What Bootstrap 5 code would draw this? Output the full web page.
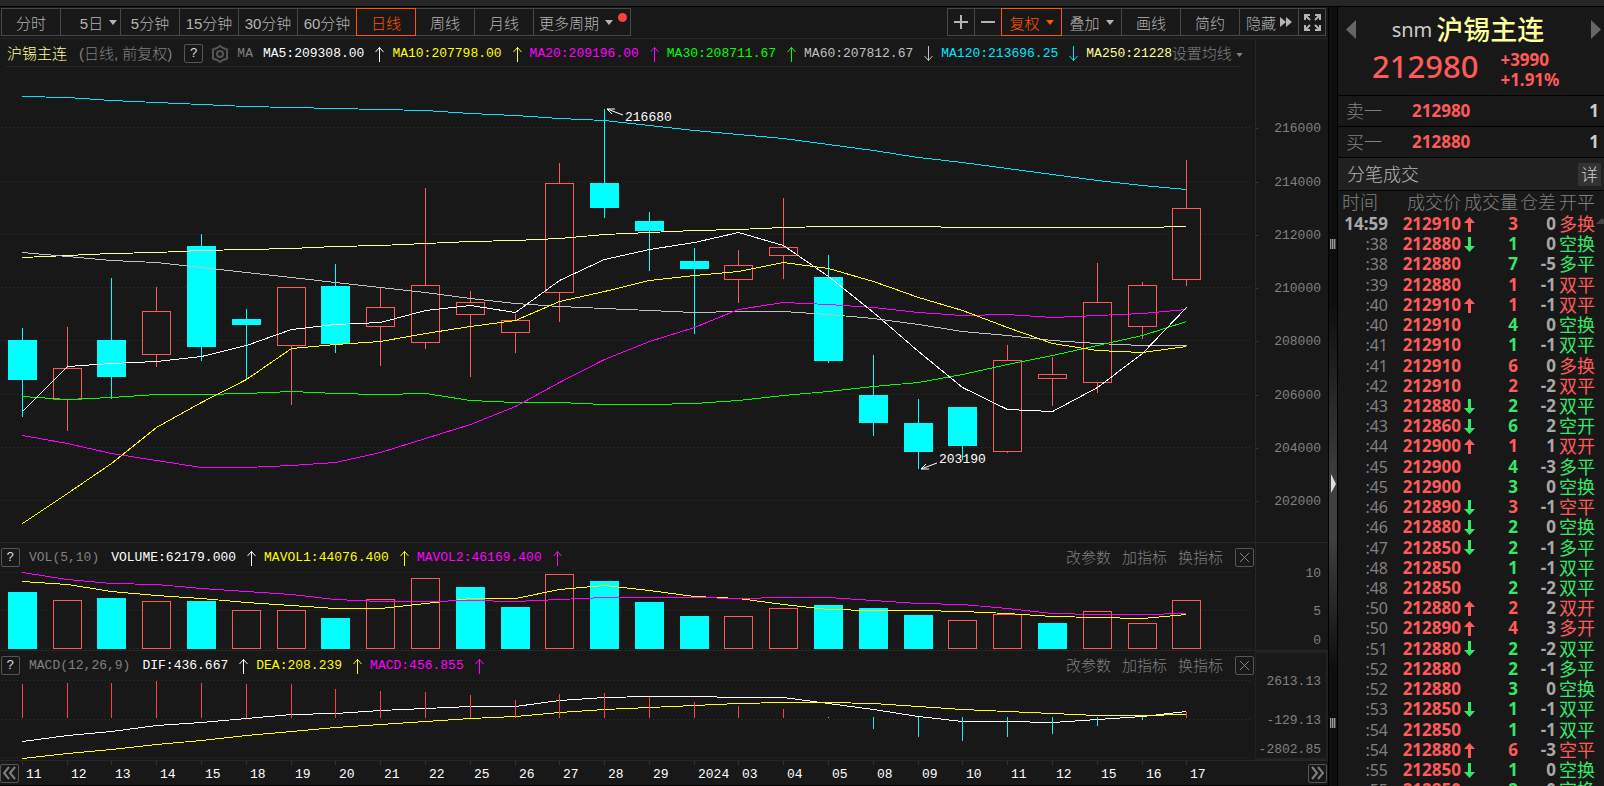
<!DOCTYPE html>
<html lang="zh-CN">
<head>
<meta charset="utf-8">
<meta name="viewport" content="width=device-width, initial-scale=1">
<title>沪锡主连 日线</title>
<link href="https://cdn.jsdelivr.net/npm/bootstrap@5.3.0/dist/css/bootstrap.min.css" rel="stylesheet">
<style>
:root { --bg:#181818; --edge:#474747; --rule:#262626; --dim:#808080; --txt:#a8a8a8; --red:#ff5a5a; --green:#36e668; --gold:#ffff9b; --hot:#ff5500; }
body { background:var(--bg); color:var(--txt); font-family:"Liberation Mono","Noto Sans CJK SC",monospace; font-size:13px; line-height:20px; }
button { background:none; border:0; padding:0; color:inherit; font:inherit; }
.fit-y { min-height:0; }
.fit-x { min-width:0; }
.strip { height:7px; background:#262626; border-bottom:1px solid #000; }
.tools { padding:1px 2px 2px 1px; height:31px; }
.tool { height:28px; min-width:60px; margin-right:-1px; border:1px solid var(--edge); font:300 15px "Liberation Sans","Noto Sans CJK SC",sans-serif; color:#b4b4b4; display:flex; align-items:center; justify-content:center; gap:6px; position:relative; white-space:nowrap; }
.tool.hot { border-color:var(--hot); color:var(--hot); z-index:1; }
.tool.square { min-width:28px; }
.tool.wide { min-width:61px; }
.tool.more { min-width:98px; padding-right:12px; }
.dot { position:absolute; right:3px; top:4px; width:9px; height:9px; border-radius:50%; background:#ff4040; }
.info { height:28px; white-space:nowrap; }
.pane { border-top:1px solid var(--rule); }
.pane .info { margin-top:-1px; padding-top:3px; }
.vol-pane { height:108px; }
.macd-pane { height:110px; }
.plot { min-width:0; flex:1 1 0; }
.plot > svg, .scale > svg { display:block; width:100%; flex:1 1 0; min-height:0; overflow:visible; }
.scale { width:73px; flex:none; border-left:1px solid var(--rule); padding-top:28px; }
.framed { border:1px solid #222; border-width:2px 2px 2px 1px; padding-top:26px; }
.cjk { font:300 15px/20px "Liberation Sans","Noto Sans CJK SC",sans-serif; }
.square-btn { width:19px; height:19px; margin:0 1px; border:1px solid #555; border-radius:2px; color:#ddd; font-size:13px; line-height:18px; text-align:center; flex:none; display:flex; align-items:center; justify-content:center; }
.title-row { padding-left:7px; }
.title-row .square-btn { margin:0 0 0 12px; }
.actions { gap:11px; padding-right:11px; }
.ma-list { padding-left:2px; }
.reading { display:flex; align-items:center; gap:10px; flex:none; margin-right:8px; }
.c-dim { color:var(--dim); } .c-white { color:#fff; } .c-yellow { color:#ff0; } .c-magenta { color:#f0f; } .c-lime { color:#0f0; } .c-silver { color:#c0c0c0; } .c-cyan { color:#00e5ff; } .c-gold { color:var(--gold); }
.c-red { color:var(--red); } .c-green { color:var(--green); }
.time-row { height:25px; border-top:1px solid var(--rule); }
.time-row .days { display:block; flex:1 1 0; min-width:0; height:24px; }
.base { height:1px; background:#000; }
.splitter { width:10px; border:1px solid #000; border-width:0 1px; background:linear-gradient(#0e0e0e 38%, #404040 62%, #404040 68%, #0e0e0e 85%); }
.splitter i { flex:31 1 0; }
.splitter i:first-child { flex-grow:32; }
.splitter i:last-child { flex-grow:8; }
.grip { width:6px; height:10px; background:repeating-linear-gradient(90deg,#999 0 1px,#444 1px 2px); }
.side { width:266px; font-family:"Noto Sans","Noto Sans CJK SC",sans-serif; font-size:17px; overflow:hidden; }
.quote { height:89px; padding:6px 3px 0 8px; border-bottom:1px solid #000; }
.quote .pair { padding-right:11px; }
.quote .name { font-size:27px; line-height:33px; font-weight:500; color:var(--gold); }
.quote .code { font-size:20px; color:#ccc; }
.quote .last { font-size:31px; line-height:40px; padding-left:26px; font-weight:500; color:var(--red); }
.quote .chg { font-weight:700; line-height:20px; padding:4px 0 0 22px; color:var(--red); }
.lvl { border-bottom:1px solid #000; height:31px; padding:0 5px 0 8px; }
.lvl .who { width:66px; font-weight:300; font-size:18px; color:var(--dim); }
.lvl b { color:var(--red); }
.lvl .qty { color:#ccc; }
.sect { height:33px; background:#202020; border-bottom:1px solid #000; padding:0 3px 0 9px; font-size:18px; font-weight:300; color:#b4b4b4; }
.sect button { width:23px; height:23px; background:#333; font-size:17px; line-height:23px; color:#ccc; }
.ticks { table-layout:fixed; width:266px; border-collapse:collapse; text-align:right; white-space:nowrap; }
.ticks th { font-size:18px; font-weight:300; color:var(--dim); height:23px; padding:0; line-height:23px; }
.ticks td { height:20px; line-height:20px; padding:0; font-weight:700; }
.ticks tr:nth-child(9n+4) td, .ticks tr:nth-child(9n+8) td { height:21px; }
.ticks .t { font-weight:400; font-size:16px; color:var(--dim); }
.ticks .full { font-weight:700; font-size:17px; color:var(--txt); }
.ticks .p { color:var(--red); padding-right:3px; }
.ticks .when { padding-right:10px; }
.ticks .cost { padding-right:3px; }
.ticks .d { color:var(--txt); }
.ticks .k { font-size:18px; text-align:left; padding-left:3px; }
.ticks td.k { font-weight:400; }
.ticks svg { display:block; }
.up-mark { position:absolute; right:0; top:27px; }
svg text { font-family:"Liberation Mono",monospace; font-size:13px; dominant-baseline:central; }
</style>
</head>
<body class="vh-100 overflow-hidden d-flex flex-column">
<svg width="0" height="0" class="position-absolute" aria-hidden="true">
  <symbol id="up" viewBox="0 0 10 16"><path d="M5.500 16V1M1.500 6L5.500 1.500L9.500 6" fill="none" stroke="currentColor"/></symbol>
  <symbol id="down" viewBox="0 0 10 16"><path d="M5.500 0V15M1.500 10L5.500 14.500L9.500 10" fill="none" stroke="currentColor"/></symbol>
  <symbol id="caret" viewBox="0 0 8 5"><path d="M0 0H8L4 5Z" fill="currentColor"/></symbol>
  <symbol id="tickup" viewBox="0 0 11 15"><path d="M5.500 0L11 6H7V15H4V6H0Z" fill="currentColor"/></symbol>
  <symbol id="tickdown" viewBox="0 0 11 15"><path d="M5.500 15L11 9H7V0H4V9H0Z" fill="currentColor"/></symbol>
  <symbol id="cross" viewBox="0 0 11 11"><path d="M1 1L10 10M10 1L1 10" stroke="currentColor" fill="none"/></symbol>
</svg>
<div class="strip flex-shrink-0"></div>
<div class="d-flex flex-grow-1 fit-y">
  <main class="d-flex flex-column flex-grow-1 fit-x">
    <nav class="tools d-flex justify-content-between" aria-label="周期">
      <div class="d-flex">
        <button class="tool">分时</button>
        <button class="tool wide ps-3">5日<svg width="8" height="5"><use href="#caret"/></svg></button>
        <button class="tool">5分钟</button>
        <button class="tool">15分钟</button>
        <button class="tool">30分钟</button>
        <button class="tool">60分钟</button>
        <button class="tool hot">日线</button>
        <button class="tool">周线</button>
        <button class="tool">月线</button>
        <button class="tool more">更多周期<svg width="8" height="5"><use href="#caret"/></svg><span class="dot"></span></button>
      </div>
      <div class="d-flex">
        <button class="tool square" aria-label="放大"><svg width="14" height="14"><path d="M7 0V14M0 7H14" stroke="currentColor" stroke-width="2"/></svg></button>
        <button class="tool square" aria-label="缩小"><svg width="14" height="14"><path d="M0 7H14" stroke="currentColor" stroke-width="2"/></svg></button>
        <button class="tool hot wide">复权<svg width="8" height="5"><use href="#caret"/></svg></button>
        <button class="tool wide">叠加<svg width="8" height="5"><use href="#caret"/></svg></button>
        <button class="tool">画线</button>
        <button class="tool">简约</button>
        <button class="tool gap-1">隐藏<svg width="12" height="10"><path d="M0 0L6 5L0 10ZM6 0L12 5L6 10Z" fill="currentColor"/></svg></button>
        <button class="tool square me-0" aria-label="全屏"><svg width="17" height="17" fill="none" stroke="currentColor" stroke-width="2"><path d="M1 6V1H6M1 1L6 6M11 1H16V6M16 1L11 6M1 11V16H6M1 16L6 11M16 11V16H11M16 16L11 11"/></svg></button>
      </div>
    </nav>

    <section class="pane d-flex flex-grow-1 fit-y">
      <div class="plot d-flex flex-column">
        <div class="info title-row d-flex align-items-center">
          <span class="cjk c-gold">沪锡主连</span>
          <span class="cjk c-dim ms-2 ps-1">(日线, 前复权)</span>
          <button class="square-btn">?</button>
          <svg width="18" height="18" class="ms-2 flex-shrink-0" fill="none" stroke="#555" stroke-width="2"><path d="M9 1L12 3L16 4.500V13.500L12 15L9 17L6 15L2 13.500V4.500L6 3Z"/><circle cx="9" cy="9" r="3"/></svg>
          <span class="c-dim ms-2">MA</span>
          <div class="ma-list d-flex flex-grow-1 overflow-hidden ms-2" id="ma"></div>
          <button class="cjk c-dim me-2 pe-1 flex-shrink-0">设置均线 <svg width="7" height="4" class="align-middle"><use href="#caret"/></svg></button>
        </div>
        <svg id="price"></svg>
      </div>
      <div class="scale d-flex flex-column"><svg id="priceScale"></svg></div>
    </section>

    <section class="pane vol-pane d-flex flex-shrink-0">
      <div class="plot d-flex flex-column">
        <div class="info d-flex align-items-center">
          <button class="square-btn">?</button>
          <span class="c-dim ms-2 me-2 pe-1">VOL(5,10)</span>
          <div class="d-flex flex-grow-1 overflow-hidden" id="vo"></div>
          <div class="actions d-flex cjk c-dim"><button>改参数</button><button>加指标</button><button>换指标</button></div>
          <button class="square-btn c-dim" aria-label="关闭"><svg width="11" height="11"><use href="#cross"/></svg></button>
        </div>
        <svg id="volume"></svg>
      </div>
      <div class="scale d-flex flex-column"><svg id="volumeScale"></svg></div>
    </section>

    <section class="pane macd-pane d-flex flex-shrink-0">
      <div class="plot d-flex flex-column">
        <div class="info d-flex align-items-center">
          <button class="square-btn">?</button>
          <span class="c-dim ms-2 me-2 pe-1">MACD(12,26,9)</span>
          <div class="d-flex flex-grow-1 overflow-hidden" id="mc"></div>
          <div class="actions d-flex cjk c-dim"><button>改参数</button><button>加指标</button><button>换指标</button></div>
          <button class="square-btn c-dim" aria-label="关闭"><svg width="11" height="11"><use href="#cross"/></svg></button>
        </div>
        <svg id="macd"></svg>
      </div>
      <div class="scale framed d-flex flex-column"><svg id="macdScale"></svg></div>
    </section>

    <div class="time-row d-flex align-items-center flex-shrink-0">
      <button class="square-btn c-dim ms-0" aria-label="向前"><svg width="13" height="14" fill="none" stroke="currentColor" stroke-width="2"><path d="M6 1L1 7L6 13M12 1L7 7L12 13"/></svg></button>
      <svg id="days" class="days"></svg>
      <button class="square-btn c-dim" aria-label="向后"><svg width="13" height="14" fill="none" stroke="currentColor" stroke-width="2"><path d="M1 1L6 7L1 13M7 1L12 7L7 13"/></svg></button>
    </div>
    <div class="base"></div>
  </main>

  <div class="splitter d-flex flex-column align-items-center flex-shrink-0">
    <i></i><span class="grip"></span><i></i>
    <svg width="5" height="19"><path d="M0 0L5 10L0 19Z" fill="#ddd"/></svg>
    <i></i><span class="grip"></span><i></i>
  </div>

  <aside class="side flex-shrink-0">
    <div class="quote">
      <div class="d-flex align-items-center justify-content-between">
        <button aria-label="上一个" class="d-flex"><svg width="10" height="19"><path d="M10 0V19L0 9.500Z" fill="#666"/></svg></button>
        <div class="pair d-flex align-items-center gap-1"><span class="code">snm</span><span class="name">沪锡主连</span></div>
        <button aria-label="下一个" class="d-flex"><svg width="10" height="19"><path d="M0 0V19L10 9.500Z" fill="#666"/></svg></button>
      </div>
      <div class="d-flex align-items-start"><span class="last">212980</span><div class="chg"><div>+3990</div><div>+1.91%</div></div></div>
    </div>
    <div class="lvl d-flex align-items-center"><span class="who">卖一</span><b>212980</b><b class="qty ms-auto">1</b></div>
    <div class="lvl d-flex align-items-center"><span class="who">买一</span><b>212880</b><b class="qty ms-auto">1</b></div>
    <div class="sect d-flex align-items-center justify-content-between"><span>分笔成交</span><button>详</button></div>
    <div class="position-relative">
      <table class="ticks">
        <colgroup><col style="width:50px"><col style="width:76px"><col style="width:12px"><col style="width:42px"><col style="width:38px"><col style="width:48px"></colgroup>
        <thead><tr><th class="when">时间</th><th class="cost">成交价</th><th colspan="2">成交量</th><th>仓差</th><th class="k">开平</th></tr></thead>
        <tbody id="deals"></tbody>
      </table>
      <svg width="8" height="7" class="up-mark"><path d="M0 6L6 0L8 2V6Z" fill="#444"/></svg>
    </div>
  </aside>
</div>

<script src="https://cdn.jsdelivr.net/npm/bootstrap@5.3.0/dist/js/bootstrap.bundle.min.js"></script>
<script>
const byId = id => document.getElementById(id);

// Indicator readings: colour, text, direction
const readings = {
  ma: [['white','MA5:209308.00','up'],['yellow','MA10:207798.00','up'],['magenta','MA20:209196.00','up'],['lime','MA30:208711.67','up'],['silver','MA60:207812.67','down'],['cyan','MA120:213696.25','down'],['gold','MA250:212284.40','up']],
  vo: [['white','VOLUME:62179.000','up'],['yellow','MAVOL1:44076.400','up'],['magenta','MAVOL2:46169.400','up']],
  mc: [['white','DIF:436.667','up'],['yellow','DEA:208.239','up'],['magenta','MACD:456.855','up']]
};
for (const [id, list] of Object.entries(readings))
  byId(id).innerHTML = list.map(([c, t, a]) => `<span class="reading c-${c}">${t}<svg width="10" height="16"><use href="#${a}"/></svg></span>`).join('');

// Deals: time, price, arrow, volume, colour, position change, kind
const deals = `14:59 212910 u 3 r 0 多换|:38 212880 d 1 g 0 空换|:38 212880 - 7 g -5 多平|:39 212880 - 1 r -1 双平|:40 212910 u 1 r -1 双平|:40 212910 - 4 g 0 空换|:41 212910 - 1 g -1 双平|:41 212910 - 6 r 0 多换|:42 212910 - 2 r -2 双平|:43 212880 d 2 g -2 双平|:43 212860 d 6 g 2 空开|:44 212900 u 1 r 1 双开|:45 212900 - 4 g -3 多平|:45 212900 - 3 g 0 空换|:46 212890 d 3 r -1 空平|:46 212880 d 2 g 0 空换|:47 212850 d 2 g -1 多平|:48 212850 - 1 g -1 双平|:48 212850 - 2 g -2 双平|:50 212880 u 2 r 2 双开|:50 212890 u 4 r 3 多开|:51 212880 d 2 g -2 双平|:52 212880 - 2 g -1 多平|:52 212880 - 3 g 0 空换|:53 212850 d 1 g -1 双平|:54 212850 - 1 g -1 双平|:54 212880 u 6 r -3 空平|:55 212850 d 1 g 0 空换|:55 212850 - 2 g 0 空换`;
byId('deals').innerHTML = deals.split('|').map((row, i) => {
  const [t, p, a, v, c, d, k] = row.split(' '), col = c === 'r' ? 'c-red' : 'c-green';
  const mark = a === '-' ? '' : `<svg width="11" height="15" class="${a === 'u' ? 'c-red' : 'c-green'}"><use href="#tick${a === 'u' ? 'up' : 'down'}"/></svg>`;
  return `<tr><td class="t ${i ? '' : 'full'}">${t}</td><td class="p">${p}</td><td>${mark}</td><td class="${col}">${v}</td><td class="d">${d}</td><td class="k ${col}">${k}</td></tr>`;
}).join('');

const xs = [22,67,111,156,201,246,291,335,380,425,470,515,559,604,649,694,738,783,828,873,918,962,1007,1052,1097,1142,1186];
const dates = '11 12 13 14 15 18 19 20 21 22 25 26 27 28 29 2024 03 04 05 08 09 10 11 12 15 16 17'.split(' ');
const rising = xs.map((x, i) => [1,3,6,8,9,10,11,12,16,17,22,23,24,25,26].includes(i));
const volRising = xs.map((x, i) => [1,3,5,6,8,9,12,16,17,21,22,24,25,26].includes(i));
// Candles: high, body top, body bottom, low
const candles = [[262,274,314,351],[261,302,334,365],[212,274,311,333],[221,245,289,301],[168,180,281,295],[243,253,259,314],[221,221,280,339],[198,220,278,287],[221,241,261,300],[122,219,277,283],[225,236,249,311],[248,254,267,287],[97,117,227,256],[43,117,142,152],[146,155,165,205],[182,195,203,268],[184,199,214,237],[132,181,190,213],[189,211,295,297],[289,329,357,370],[333,357,386,403],[341,341,380,394],[279,294,386,387],[291,308,313,340],[197,236,317,327],[216,219,261,273],[94,142,214,220]];
const averages = [
  ['#00e5ff',[30,31,34,36,38,40,41,42,43,44,47,49,52,54,59,64,68,72,78,84,91,96,102,108,114,119,123]],
  ['#ffff9b',[191,189,187,186,184,183,182,180,179,177,175,174,172,168,166,164,163,161,160,160,160,161,161,161,161,161,160]],
  ['#c0c0c0',[186,190,194,196,201,206,211,216,221,226,232,237,240,242,244,246,245,245,248,252,258,265,269,274,277,279,279]],
  ['#00ff00',[330,333,331,328,328,327,325,327,328,327,334,336,336,338,338,337,334,329,325,320,316,308,298,289,279,269,255]],
  ['#ff00ff',[369,377,387,394,401,401,399,396,386,372,358,340,316,293,275,261,243,236,238,241,246,249,248,251,249,247,243]],
  ['#ffff00',[457,427,397,361,336,313,282,278,275,267,260,254,235,225,214,209,205,196,202,215,231,244,261,277,284,286,280]],
  ['#ffffff',[345,300,297,295,290,279,263,258,256,244,239,246,214,193,183,176,166,179,210,246,285,321,343,345,321,287,241]]
];
const volTops = [22,30,28,31,31,40,40,48,29,8,17,37,4,11,32,46,46,38,35,38,45,50,44,53,41,53,30];
const volLines = [
  ['#ffff00',[11,14,21,25,28,32,35,38,38,33,28,28,19,15,20,26,28,34,39,40,40,41,43,46,47,48,44]],
  ['#ff00ff',[2,9,13,14,18,21,24,29,31,31,30,31,29,27,27,27,28,27,27,30,33,34,38,43,44,44,43]]
];
const macdEnds = [6,5,5,3,5,6,6,11,13,14,17,22,16,15,19,24,28,31,40,51,59,63,59,56,48,42,34];
const macdLines = [
  ['#ffffff',[63,57,53,47,44,40,36,35,32,30,28,28,22,19,18,18,19,19,25,31,38,43,43,44,41,38,33]],
  ['#ffff00',[80,75,71,66,62,57,53,49,46,43,40,38,34,31,29,27,25,24,24,25,28,31,33,35,37,37,36]]
];

function drawAll() {
  const W = byId('price').clientWidth, k = W / 1255, X = v => Math.round(v * k);
  const RED = '#ff5a5a', CYAN = '#00ffff';
  const scaler = (id, h) => { const f = byId(id).clientHeight / h; return v => Math.round(v * f); };
  const seg = (x1, y1, x2, y2, c, extra = '') => `<path d="M${x1} ${y1}L${x2} ${y2}" fill="none" stroke="${c}" ${extra}/>`;
  const grid = (ys, Y) => ys.map(y => seg(1, Y(y) + .5, W - 5, Y(y) + .5, '#333', 'stroke-dasharray="1 3"')).join('');
  const curves = (set, Y) => set.map(([c, v]) => `<polyline fill="none" stroke="${c}" points="${v.map((y, i) => (X(xs[i]) + .5) + ',' + (Y(y) + .5)).join(' ')}"/>`).join('');
  const box = (x, t, b, up) => up
    ? `<rect x="${x - 13.5}" y="${t + .5}" width="28" height="${Math.max(1, b - t - 1)}" fill="#181818" stroke="${RED}"/>`
    : `<rect x="${x - 14}" y="${t}" width="29" height="${b - t}" fill="${CYAN}"/>`;
  const crisp = s => `<g shape-rendering="crispEdges">${s}</g>`;
  const label = (x, y, t, c, a = 'start') => `<text x="${x}" y="${y}" fill="${c}" text-anchor="${a}">${t}</text>`;

  let Y = scaler('price', 476);
  const levels = [61,115,168,221,274,328,381,434];
  byId('price').innerHTML = crisp(seg(6, .5, W - 14, .5, '#262626') + grid(levels, Y)
    + candles.map(([h, t, b, l], i) => { const x = X(xs[i]), up = rising[i];
        return seg(x + .5, Y(h), x + .5, Y(l), up ? RED : CYAN) + box(x, Y(t), Y(b), up); }).join('')
    + curves(averages, Y))
    + `<g fill="none" stroke="#fff"><path d="M${X(623)} ${Y(49)}L${X(607)} ${Y(43)}h8m-8 0l5 5"/><path d="M${X(937)} ${Y(397)}L${X(921)} ${Y(403)}h8m-8 0l5-5"/></g>`
    + label(X(625), Y(51), '216680', '#fff') + label(X(939), Y(393), '203190', '#fff');
  byId('priceScale').innerHTML = levels.map((y, i) => seg(0, Y(y) + .5, 3, Y(y) + .5, '#333') + label(65, Y(y), 216000 - i * 2000, '#808080', 'end')).join('');

  Y = scaler('volume', 80);
  byId('volume').innerHTML = crisp(grid([2,40,78], Y) + volTops.map((t, i) => box(X(xs[i]), Y(t), Y(79), volRising[i])).join('') + curves(volLines, Y));
  byId('volumeScale').innerHTML = [[2,10],[40,5],[69,0]].map(([y, t]) => label(65, Y(y), t, '#808080', 'end')).join('');

  Y = scaler('macd', 82);
  byId('macd').innerHTML = crisp(grid([2,41,79], Y) + curves(macdLines, Y)
    + macdEnds.map((e, i) => { const x = X(xs[i]) + .5, down = i > 17 && i < 26;
        return seg(x, Y(down ? 39 : 40), x, Y(e), down ? '#22e8f0' : '#ff4040'); }).join(''));
  byId('macdScale').innerHTML = [[2,'2613.13'],[41,'-129.13'],[70,'-2802.85']].map(([y, t]) => label(65, y, t, '#808080', 'end')).join('');

  byId('days').innerHTML = dates.map((d, i) => seg(X(xs[i]) - 19.5, 0, X(xs[i]) - 19.5, 4, '#333') + label(X(xs[i]) - 16, 13, d, '#fff')).join('');
}
drawAll();
addEventListener('resize', drawAll);
</script>
</body>
</html>
